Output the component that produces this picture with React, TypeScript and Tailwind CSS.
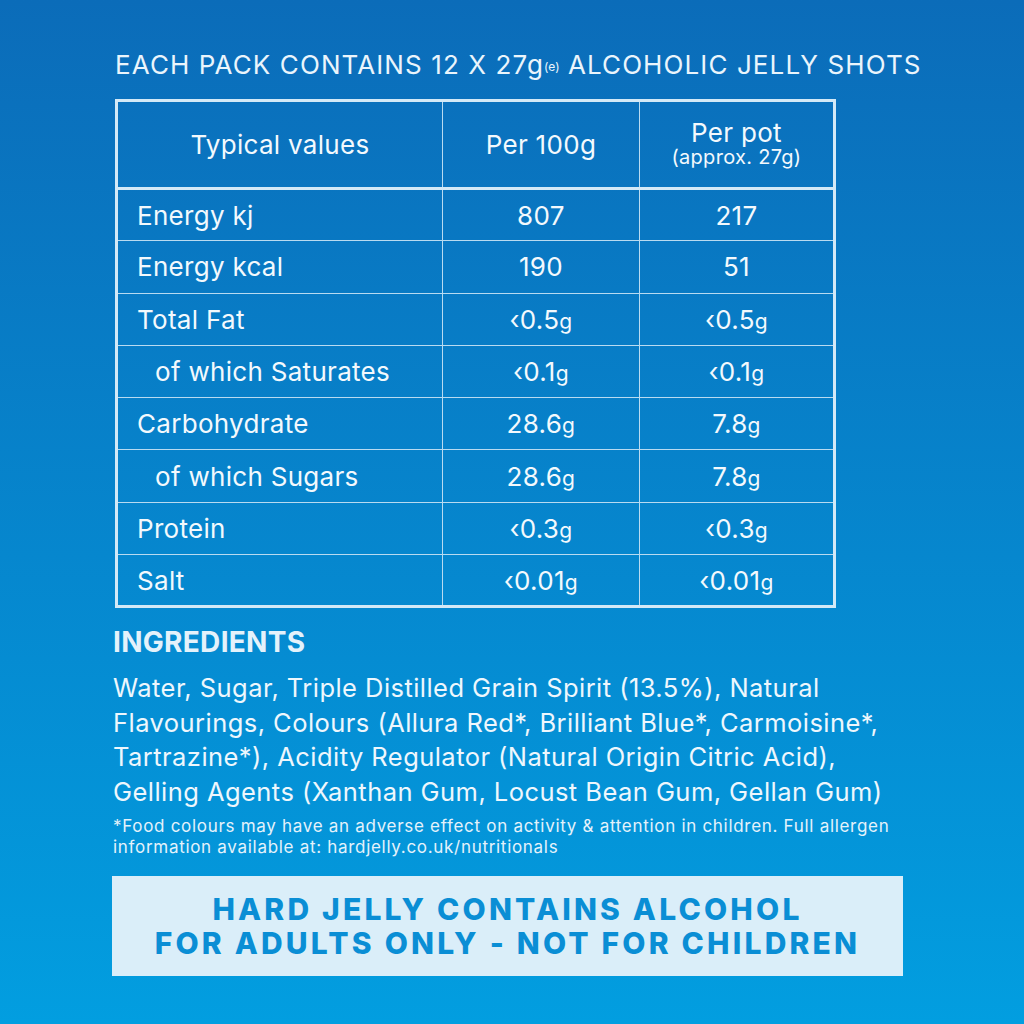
const rows: { label: string; indent?: boolean; per100: [string, string?]; perPot: [string, string?] }[] = [
  { label: "Energy kj", per100: ["807"], perPot: ["217"] },
  { label: "Energy kcal", per100: ["190"], perPot: ["51"] },
  { label: "Total Fat", per100: ["‹0.5", "g"], perPot: ["‹0.5", "g"] },
  { label: "of which Saturates", indent: true, per100: ["‹0.1", "g"], perPot: ["‹0.1", "g"] },
  { label: "Carbohydrate", per100: ["28.6", "g"], perPot: ["7.8", "g"] },
  { label: "of which Sugars", indent: true, per100: ["28.6", "g"], perPot: ["7.8", "g"] },
  { label: "Protein", per100: ["‹0.3", "g"], perPot: ["‹0.3", "g"] },
  { label: "Salt", per100: ["‹0.01", "g"], perPot: ["‹0.01", "g"] },
];

const Value = ({ v }: { v: [string, string?] }) => (
  <span>
    {v[0]}
    {v[1] && <span className="text-[21px]">{v[1]}</span>}
  </span>
);

export default function App() {
  return (
    <div
      className="flex h-[1024px] w-[1024px] flex-col bg-gradient-to-b from-[#0b6cb9] to-[#029ee0] text-white"
      style={{ fontFamily: "Inter, 'Noto Sans', sans-serif" }}
    >
      <h1 className="mt-[50px] whitespace-nowrap pl-[115px] text-[26px] font-normal leading-[30px] tracking-[1.1px] text-[#eaf5fc]">
        EACH PACK CONTAINS 12 X 27g
        <span className="align-middle text-[12px] tracking-normal">(e)</span> ALCOHOLIC JELLY SHOTS
      </h1>

      <table className="ml-[115px] mt-[17px] w-[721px] border-collapse border-[3px] border-[#d3e9f7] text-[26px] tracking-[0.3px] text-[#f3f9fd]">
        <colgroup>
          <col className="w-[327px]" />
          <col className="w-[198px]" />
          <col className="w-[196px]" />
        </colgroup>
        <thead>
          <tr className="h-[88px] border-b-[3px] border-[#d3e9f7]">
            <th className="border-r border-[#b9dbf1] font-normal">Typical values</th>
            <th className="border-r border-[#b9dbf1] font-normal">Per 100g</th>
            <th className="font-normal">
              <div className="leading-[26px]">Per pot</div>
              <div className="text-[20px] leading-[22px]">(approx. 27g)</div>
            </th>
          </tr>
        </thead>
        <tbody>
          {rows.map((r) => (
            <tr key={r.label} className="h-[52.3px] border-b border-[#b9dbf1] last:border-b-0">
              <td className={`border-r border-[#b9dbf1] ${r.indent ? "pl-[37px]" : "pl-[19px]"}`}>{r.label}</td>
              <td className="border-r border-[#b9dbf1] text-center">
                <Value v={r.per100} />
              </td>
              <td className="text-center">
                <Value v={r.perPot} />
              </td>
            </tr>
          ))}
        </tbody>
      </table>

      <div className="whitespace-nowrap pl-[113px]">
        <h2 className="mt-[17px] text-[28px] font-bold leading-[34px] tracking-[0.3px] text-[#e4f2fb]">INGREDIENTS</h2>
        <p className="mt-[12px] text-[25.5px] leading-[34.4px] tracking-[0.45px] text-[#eef7fd]">
          Water, Sugar, Triple Distilled Grain Spirit (13.5%), Natural
          <br />
          Flavourings, Colours (Allura Red*, Brilliant Blue*, Carmoisine*,
          <br />
          Tartrazine*), Acidity Regulator (Natural Origin Citric Acid),
          <br />
          Gelling Agents (Xanthan Gum, Locust Bean Gum, Gellan Gum)
        </p>
        <p className="mt-[7px] text-[17px] leading-[21px] tracking-[0.7px] text-[#e4f2fb]">
          *Food colours may have an adverse effect on activity &amp; attention in children. Full allergen
          <br />
          information available at: hardjelly.co.uk/nutritionals
        </p>
      </div>

      <div className="ml-[112px] mt-[18px] flex h-[100px] w-[791px] flex-col items-center justify-center bg-[#daeef9] text-[30px] font-extrabold leading-[34px] tracking-[3.2px] text-[#0a8ed5]">
        <div>HARD JELLY CONTAINS ALCOHOL</div>
        <div>FOR ADULTS ONLY - NOT FOR CHILDREN</div>
      </div>
    </div>
  );
}
